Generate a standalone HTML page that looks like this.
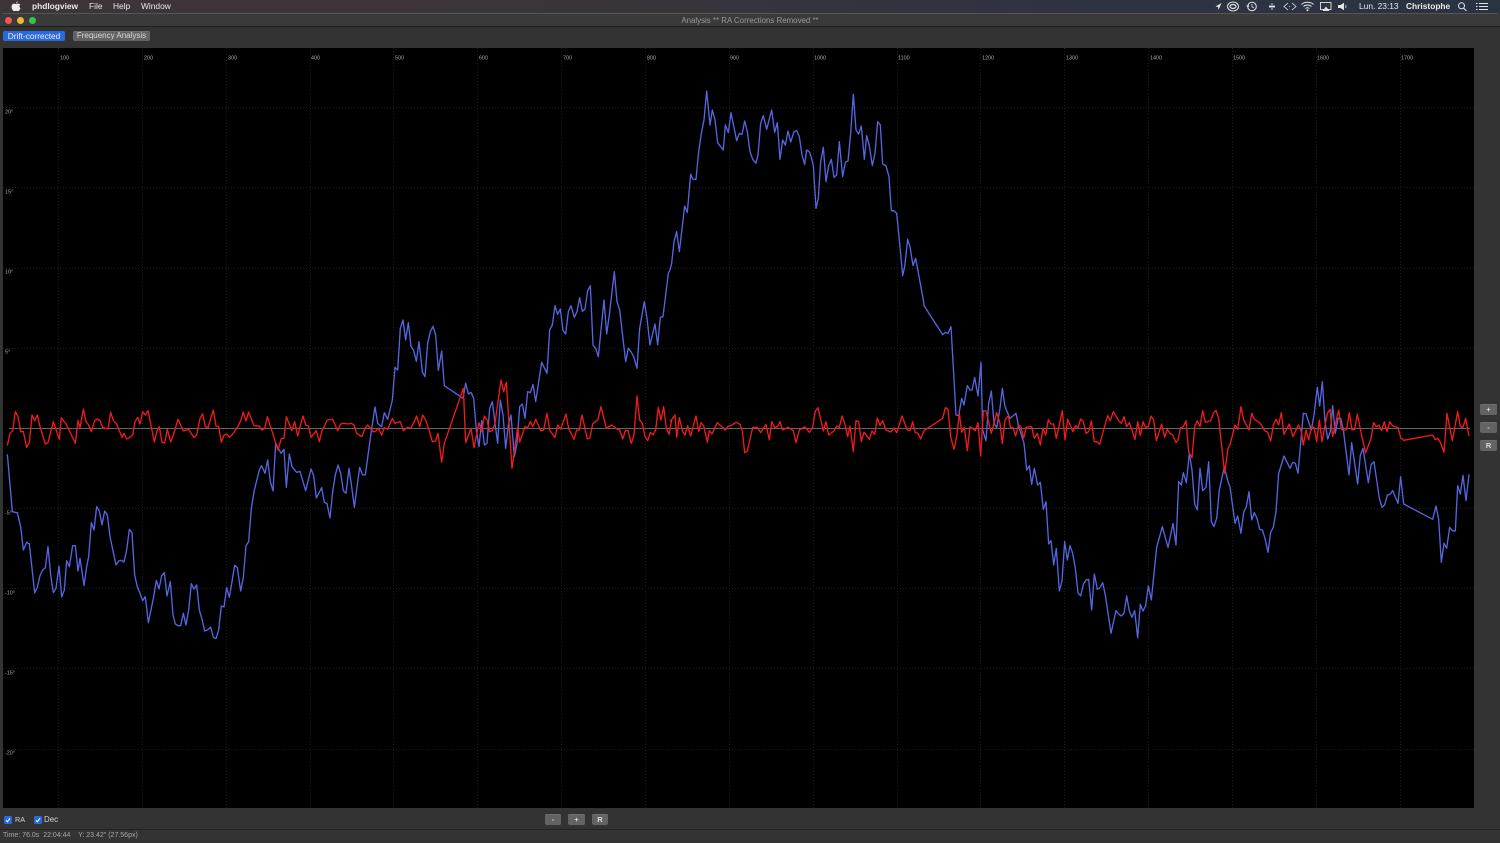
<!DOCTYPE html>
<html><head><meta charset="utf-8"><title>phdlogview</title>
<style>
html,body{margin:0;padding:0;background:#333;}
body{width:1500px;height:843px;overflow:hidden;position:relative;font-family:"Liberation Sans",sans-serif;filter:blur(.3px);}
.a{position:absolute;white-space:nowrap;}
#menu{left:0;top:0;width:1500px;height:13px;background:linear-gradient(90deg,#3d3438 0,#3b3439 35%,#2f3340 70%,#2a3341 100%);}
.m{position:absolute;top:1px;font-size:8.4px;line-height:10px;color:#e8e8e8;white-space:nowrap;}
#win{left:0;top:13px;width:1500px;height:830px;background:#333;border-radius:4px 4px 0 0;box-shadow:inset 0 1px 0 #555;}
#title{left:0;top:14px;width:1500px;height:12px;background:#3a3a3a;border-bottom:1px solid #1d1d1d;text-align:center;font-size:7.9px;line-height:13px;color:#999;}
.dot{position:absolute;top:17px;width:7px;height:7px;border-radius:50%;}
.btn{position:absolute;background:#636363;border-radius:2px;color:#d8d8d8;text-align:center;font-size:7.6px;box-shadow:inset 0 1px 0 #6e6e6e;}
.chk{position:absolute;top:816px;width:8px;height:8px;background:#2a68dc;border-radius:1.5px;}
.t{position:absolute;font-size:7.6px;line-height:10px;color:#d5d5d5;white-space:nowrap;}
#plot{left:3px;top:48px;width:1471px;height:760px;background:#000;}
svg text{font-family:"Liberation Sans",sans-serif;font-size:5.4px;fill:#a8a8a8;}
</style></head><body>
<div class="a" id="menu"></div>
<svg class="a" style="left:11px;top:1px" width="10" height="11" viewBox="0 0 10 11"><path d="M6.6 0.4C6 .5 5.1 1.2 5 2.4 5.8 2.4 6.7 1.5 6.6.4ZM5 3C4.400 3 3.900 2.600 3.200 2.600 1.800 2.600.6 3.800.6 5.700.6 7.800 2.100 10.200 3.300 10.200 3.900 10.200 4.300 9.800 5.100 9.800 5.900 9.800 6.200 10.200 6.900 10.200 8 10.200 9.100 8.400 9.500 7.100 8.300 6.600 8 4.500 9.300 3.700 8.700 2.900 7.900 2.600 7.100 2.600 6.200 2.600 5.600 3 5 3Z" fill="#eee"/></svg>
<div class="m" style="left:32px;font-weight:bold">phdlogview</div>
<div class="m" style="left:89px">File</div>
<div class="m" style="left:113px">Help</div>
<div class="m" style="left:141px">Window</div>
<svg class="a" style="left:1210px;top:0" width="280" height="13" viewBox="0 0 280 13" fill="none" stroke="#e4e4e4" stroke-width="1">
<path d="M5.500 6.500L11.500 3 8.500 10 8 7Z" fill="#e4e4e4" stroke="none"/>
<ellipse cx="23" cy="6.500" rx="5.500" ry="4.500"/><ellipse cx="23" cy="6.500" rx="3" ry="2" stroke-width="1.200"/>
<circle cx="42" cy="6.500" r="4.300"/><path d="M42 4V6.800L44 8M36.500 5.500L38 7 39 5.500" stroke-width=".8"/>
<path d="M62 3V10M60 5V8M64 5V8M59 6.500H65" stroke-width=".9"/>
<path d="M78 3L74 6.500 78 10M82 3L86 6.500 82 10" stroke-width=".8"/><path d="M79 6.500H81" stroke-dasharray="1 1" stroke-width=".7"/>
<path d="M91.500 4.500C94.500 1.500 100.500 1.500 103.500 4.500M93.500 6.500C95.500 4.500 99.500 4.500 101.500 6.500M95.500 8.500C96.500 7.500 98.500 7.500 99.500 8.500" stroke-width="1"/><circle cx="97.500" cy="10.200" r="1" fill="#e4e4e4" stroke="none"/>
<rect x="110.500" y="2.500" width="10.500" height="7" stroke-width=".9"/><path d="M112.500 11L116 6.500 119.500 11Z" fill="#e4e4e4" stroke="none"/>
<path d="M128 5H130.500L134 2.800V10.200L130.500 8H128Z" fill="#e4e4e4" stroke="none"/><path d="M135.500 5C136.300 6 136.300 7 135.500 8" stroke-width=".7"/>
<circle cx="251.500" cy="5.800" r="3"/><path d="M253.500 8L256.500 11"/>
<path d="M269 3.500H278M269 6.500H278M269 9.500H278M266 3.500H267.500M266 6.500H267.500M266 9.500H267.500" stroke-width="1.100"/>
</svg>
<div class="m" style="left:1359px">Lun. 23:13</div>
<div class="m" style="left:1406px;font-weight:bold">Christophe</div>

<div class="a" id="win"></div>
<div class="a" id="title">Analysis ** RA Corrections Removed **</div>
<div class="dot" style="left:4.500px;background:#f4574f"></div>
<div class="dot" style="left:16.500px;background:#f2b632"></div>
<div class="dot" style="left:28.500px;background:#37c44a"></div>
<div class="btn" style="left:3px;top:31px;width:62px;height:10px;line-height:10px;background:#2a6ade;color:#e8eefa;box-shadow:none;font-size:8.3px">Drift-corrected</div>
<div class="btn" style="left:73px;top:31px;width:77px;height:10px;line-height:10px;font-size:8px">Frequency Analysis</div>

<div class="a" id="plot"></div>
<svg class="a" style="left:0;top:0" width="1500" height="843" viewBox="0 0 1500 843">
<g stroke="#1e1e1e" stroke-width="1" stroke-dasharray="1 2" fill="none">
<path d="M58.500 48V808M142.500 48V808M226.500 48V808M310.500 48V808M393.500 48V808M477.500 48V808M561.500 48V808M645.500 48V808M729.500 48V808M813.500 48V808M897.500 48V808M980.500 48V808M1064.500 48V808M1148.500 48V808M1232.500 48V808M1316.500 48V808M1400.500 48V808"/>
<path d="M3 107.500H1474M3 187.500H1474M3 268.500H1474M3 348.500H1474M3 508.500H1474M3 588.500H1474M3 668.500H1474M3 749.500H1474"/>
</g>
<path d="M9 428.500H1470" stroke="#666" stroke-width="1"/>
<g>
<text x="60" y="59.500">100</text><text x="144" y="59.500">200</text><text x="228" y="59.500">300</text><text x="311" y="59.500">400</text><text x="395" y="59.500">500</text><text x="479" y="59.500">600</text><text x="563" y="59.500">700</text><text x="647" y="59.500">800</text><text x="730" y="59.500">900</text><text x="814" y="59.500">1000</text><text x="898" y="59.500">1100</text><text x="982" y="59.500">1200</text><text x="1066" y="59.500">1300</text><text x="1150" y="59.500">1400</text><text x="1233" y="59.500">1500</text><text x="1317" y="59.500">1600</text><text x="1401" y="59.500">1700</text>
<text x="5" y="113.500">20°</text><text x="5" y="193.500">15°</text><text x="5" y="273.500">10°</text><text x="5" y="353.500">5°</text><text x="5" y="514.500">-5°</text><text x="5" y="594.500">-10°</text><text x="5" y="674.500">-15°</text><text x="5" y="754.500">-20°</text>
</g>
<g fill="none" stroke-width="4" stroke-linejoin="round">
<g stroke="#5566e0">
<polyline transform="translate(0,380) scale(.33333)" points="22,223 37,395 45,397 52,398 62,440 70,510 80,487 88,492 96,565 104,638 112,622 120,587 128,570 136,563 144,500 152,585 160,638 168,625 177,558 185,651 193,630 200,542 208,560 218,497 226,497 234,573 240,535 252,617 260,560 266,530 274,428 282,450 290,380 298,393 306,435 314,393 322,405 330,470 348,555 356,543 364,541 372,546 380,510 388,448 396,458 404,585 412,620 420,640 428,662 436,650 445,728 453,690 461,650 469,601 477,627 485,587 493,578 501,648 511,605 519,705 526,732 534,737 542,737 550,700 558,735 566,690 574,611 582,627 590,615 598,690 606,718 614,753 622,750 632,741 640,772 648,776 656,750 664,678 672,681 680,623 688,652 696,605 704,556 712,563 722,633 730,593 738,497 746,485 754,385 762,335 778,270 785,257 795,280 803,240 811,305 819,333 827,190 843,220 852,208 859,322 868,222 876,260 890,277 900,274 917,332 933,267 941,287 949,354 965,323 973,367 981,371 990,414 998,335 1006,285 1014,255 1022,280 1030,332 1038,340 1047,265 1055,320 1063,382 1079,262 1088,285 1096,285 1113,160 1125,80"/>
<polyline transform="translate(375,260) scale(.33333)" points="0,440 8,490 20,500 28,458 38,478 52,420 60,322 68,330 76,205 84,180 92,240 100,188 108,258 116,272 124,304 132,245 142,335 150,350 158,250 166,215 174,199 182,225 190,331 200,273 208,377 264,415 272,370 280,402 288,397 296,415 304,510 312,560 320,482 328,555 336,550 344,445 352,425 360,490 368,550 376,420 384,465 392,565 400,495 408,465 418,590 426,550 434,440 442,432 450,475 458,395 466,398 474,373 482,425 500,307 516,340 524,210 532,195 540,137 548,163 556,147 564,212 572,222 580,155 588,137 598,172 606,155 614,113 622,154 630,147 638,92 646,77 654,255 662,265 670,290 687,120 695,222 703,165 718,35 726,125 734,150 752,305 760,265 768,275 776,290 786,325 794,205 808,125 816,175 825,255 840,192 848,254 856,172 864,170 880,40 885,30"/>
<polyline transform="translate(670,80) scale(.33333)" points="0,570 5,550 12,485 20,455 28,515 44,378 52,397 62,282 68,297 78,298 86,215 94,160 102,120 110,33 120,135 127,90 135,120 143,188 152,200 160,210 166,135 175,158 183,98 200,182 208,160 216,163 224,123 232,155 240,215 248,238 258,250 264,225 272,130 280,107 290,148 305,90 314,157 322,128 330,238 338,180 346,195 354,153 362,186 372,155 380,152 388,170 396,225 404,253 410,210 418,215 424,232 430,257 438,385 445,355 452,245 460,202 468,305 476,258 484,238 492,292 500,285 508,185 518,290 526,247 534,243 542,160 550,43 558,150 566,162 574,138 583,238 590,167 598,197 607,257 615,220 623,125 631,135 638,252 648,258 657,290 664,392 672,392 680,400 689,490 698,587 704,560 713,478 720,500 729,557 737,535 760,660"/>
<polyline transform="translate(800,80) scale(.33333)" points="370,660 372,677 428,764 436,757 444,760 453,740 468,1005 476,1007 485,955 492,975 502,917 510,930 516,930 524,893 534,948 543,847 548,1050 558,1082 566,970 574,933 582,1030 590,1043 600,985"/>
<polyline transform="translate(950,350) scale(.33333)" points="150,175 157,115 165,170 180,205 198,190 205,225 222,280 230,360 238,347 245,403 253,355 263,405 271,397 280,478 288,455 296,582 303,572 311,645 319,595 328,723 336,693 344,575 352,630 360,587 368,610 376,655 384,728 392,738 400,703 408,690 416,688 425,780 433,672 442,718 450,713 458,698 466,735 483,850 498,782 506,792 514,798 522,790 530,738 538,783 546,802 554,782 563,863 571,763 579,783 587,767 595,708 604,750 620,592 637,530 654,592 669,520 678,585 686,395 694,405 700,368 709,398 718,310 726,360 734,462 742,480 750,355 758,422 768,412 776,335 784,515 792,530 800,505 808,420 823,350 834,395 840,410"/>
<polyline transform="translate(1200,370) scale(.33333)" points="90,350 105,460 113,438 123,490 131,427 139,410 147,365 155,450 163,428 171,445 179,478 187,480 195,505 204,547 212,487 220,472 228,425 236,310 252,258 270,295 278,277 286,280 294,310 310,130 318,132 334,180 342,135 352,52 359,108 367,35 375,155 383,207 391,185 398,107 406,190 414,145 422,145 430,180 447,315 455,218 473,342 481,255 489,235 505,338 513,285 522,275 538,385 546,412 554,405 562,375 570,373 578,362 594,400 602,320 611,402 698,448 708,408 716,448 724,577 732,520 740,535 749,472 757,482 766,483 773,347 781,372 789,316 798,392 807,313"/>
</g>
<g stroke="#f01c1c">
<polyline transform="translate(0,380) scale(.33333)" points="22,197 30,160 38,152 46,95 54,110 62,155 70,155 80,202 88,188 96,105 104,122 112,105 120,140 136,192 144,188 160,125 178,178 184,113 200,135 226,190 234,122 240,143 250,87 258,125 266,135 274,155 284,122 292,117 300,122 308,143 324,147 332,97 340,122 350,132 366,172 372,160 380,177 388,173 398,165 405,125 413,112 420,132 428,95 436,105 444,92 463,186 471,152 478,140 486,187 494,189 502,148 512,186 520,165 534,118 550,153 566,148 582,173 590,165 600,115 608,102 616,140 624,143 640,90 648,138 656,139 664,187 672,165 680,162 688,172 696,165 712,143 722,122 730,96 738,123 746,96 762,137 778,138 786,150 794,145 802,110 818,160 834,210 844,176 852,175 859,110 875,152 884,125 893,168 909,108 917,135 925,138 933,172 949,152 958,185 966,152 982,120 998,118 1013,152 1022,132 1030,130 1046,132 1054,130 1062,135 1070,160 1078,165 1086,170 1095,145 1103,135 1111,143 1119,155 1125,155"/>
<polyline transform="translate(375,260) scale(.33333)" points="0,515 10,505 20,525 28,503 38,508 52,475 60,490 76,485 85,512 98,502 108,505 125,468 134,500 143,465 152,480 160,503 172,545 182,543 189,520 200,607 208,550 265,385 272,548 288,505 297,563 312,488 320,515 328,468 336,480 344,515 352,512 360,490 378,360 386,395 394,367 411,625 428,502 434,546 450,500 458,503 466,485 474,500 482,478 498,513 506,510 516,460 524,510 540,533 548,495 557,507 573,462 581,505 597,538 605,510 613,510 621,465 637,537 645,533 653,492 669,478 678,440 694,505 710,495 726,507 734,510 743,537 751,512 759,512 769,550 777,525 786,408 794,480 802,490 810,530 818,542 826,517 834,525 842,510 850,442 858,480 866,440 874,505 882,523 890,480 900,465"/>
<polyline transform="translate(670,390) scale(.33333)" points="0,95 15,75 20,142 28,83 38,125 45,135 53,107 62,138 78,78 86,125 93,98 101,107 112,157 118,122 126,132 142,98 166,120 175,108 183,107 198,97 210,103 217,122 224,188 232,183 248,113 262,112 272,128 288,103 298,150 305,95 314,112 322,110 330,95 338,120 354,112 370,122 378,158 388,120 405,110"/>
<polyline transform="translate(800,80) scale(.33333)" points="14,1040 28,1057 38,1042 46,993 54,983 70,1053 78,1025 86,1065 102,1053 110,1038 118,1042 126,1008 134,1030 143,1070 150,1038 160,1115 168,1022 176,1025 184,1085 192,1057 208,1078 216,1053 224,1063 232,1014 240,1036 248,1022 258,1050 272,1056 282,1044 290,1058 306,1008 322,1050 330,1052 338,1025 346,1058 354,1060 362,1077 372,1052 428,1015 436,983 444,988 452,1070 462,1108 470,1070 478,1000 485,1057 493,1043 502,1112 510,1040 526,1052 534,1028 542,1128 550,992 558,993 574,1060 590,998 600,1030"/>
<polyline transform="translate(950,350) scale(.33333)" points="150,220 157,281 165,210 175,197 181,232 189,233 197,258 205,225 213,230 221,264 229,231 245,230 253,265 262,250 271,285 279,235 287,255 295,209 303,222 311,222 319,265 337,182 345,270 353,208 369,245 377,227 383,235 392,207 400,215 408,250 416,245 424,213 433,275 441,275 449,283 465,225 473,197 481,212 490,185 506,212 514,220 522,200 530,230 538,218 555,268 563,215 571,257 579,215 587,232 595,230 603,198 611,210 619,272 635,222 644,262 652,238 660,250 668,255 678,278 684,270 692,233 700,230 708,212 716,305 726,323 734,230 742,212 750,230 758,182 766,217 782,212 790,190 798,181 806,205 824,370 834,295 840,285"/>
<polyline transform="translate(1200,370) scale(.33333)" points="90,225 105,165 113,178 123,110 131,150 147,180 155,130 163,148 179,158 195,183 203,187 212,213 220,165 228,148 236,165 244,128 252,193 268,162 279,200 295,165 303,180 310,225 318,180 326,210 334,170 342,172 350,215 358,150 366,215 382,130 390,118 398,200 416,120 424,178 432,182 440,178 448,128 456,180 464,178 472,133 488,210 497,248 513,205 521,158 529,170 537,165 545,182 553,155 561,185 569,155 578,168 594,173 602,203 611,211 698,195 706,209 714,205 722,220 732,247 741,130 757,212 773,125 781,170 789,172 797,145 807,198"/>
</g>
</g>
</svg>

<div class="btn" style="left:1480px;top:404px;width:17px;height:11px;line-height:11px;font-weight:bold">+</div>
<div class="btn" style="left:1480px;top:422px;width:17px;height:11px;line-height:11px;font-weight:bold">-</div>
<div class="btn" style="left:1480px;top:440px;width:17px;height:11px;line-height:11px;font-weight:bold">R</div>

<div class="chk" style="left:4px"></div>
<svg class="a" style="left:4px;top:816px" width="8" height="8" viewBox="0 0 8 8"><path d="M2 4.200L3.400 5.800 6 2.200" fill="none" stroke="#fff" stroke-width="1.100"/></svg>
<div class="t" style="left:15px;top:815px;font-size:7.2px">RA</div>
<div class="chk" style="left:34px"></div>
<svg class="a" style="left:34px;top:816px" width="8" height="8" viewBox="0 0 8 8"><path d="M2 4.200L3.400 5.800 6 2.200" fill="none" stroke="#fff" stroke-width="1.100"/></svg>
<div class="t" style="left:44px;top:815px;font-size:7.9px">Dec</div>
<div class="btn" style="left:545px;top:814px;width:16px;height:11px;line-height:11px;font-weight:bold">-</div>
<div class="btn" style="left:568px;top:814px;width:17px;height:11px;line-height:11px;font-weight:bold">+</div>
<div class="btn" style="left:592px;top:814px;width:16px;height:11px;line-height:11px;font-weight:bold">R</div>
<div class="a" style="left:0;top:829px;width:1500px;height:1px;background:#222"></div>
<div class="t" style="left:3px;top:831px;color:#a8a8a8;font-size:7px;white-space:pre">Time: 76.0s  22:04:44    Y: 23.42" (27.56px)</div>
</body></html>
